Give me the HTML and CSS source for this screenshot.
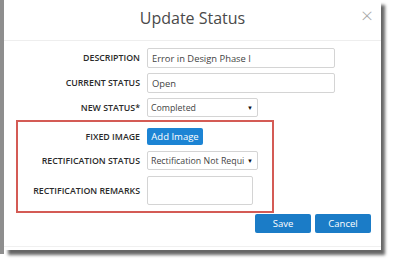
FILE: index.html
```html
<!DOCTYPE html>
<html lang="en">
<head>
    <meta charset="UTF-8">
    <title>Update Status</title>
    <link rel="stylesheet" href="styles.css">
</head>
<body>
    <div class="backdrop">
        <div class="modal">
            <div class="modal-header">
                <div class="modal-title">Update Status</div>
                <span class="close-btn">&times;</span>
            </div>
            <div class="modal-body">
                <div class="form-row">
                    <label>DESCRIPTION</label>
                    <div class="field wide">Error in Design Phase I</div>
                </div>
                <div class="form-row">
                    <label>CURRENT STATUS</label>
                    <div class="field wide">Open</div>
                </div>
                <div class="form-row">
                    <label>NEW STATUS*</label>
                    <div class="field select"><span class="value">Completed</span><span class="caret">&#9660;</span></div>
                </div>

                <!-- highlighted part -->
                <div class="highlight">
                    <div class="form-row">
                        <label>FIXED IMAGE</label>
                        <button class="add-btn">Add Image</button>
                    </div>
                    <div class="form-row">
                        <label>RECTIFICATION STATUS</label>
                        <div class="field select"><span class="value">Rectification Not Requi</span><span class="caret">&#9660;</span></div>
                    </div>
                    <div class="form-row">
                        <label>RECTIFICATION REMARKS</label>
                        <div class="field textarea"></div>
                    </div>
                </div>
            </div>
            <div class="actions">
                <button class="btn">Save</button>
                <button class="btn">Cancel</button>
            </div>
            <div class="modal-footer"></div>
        </div>
    </div>
</body>
</html>
```

FILE: styles.css
```css
* {
    margin: 0;
    padding: 0;
    box-sizing: border-box;
    font-family: 'Open Sans', sans-serif;
}

body {
    background: #fff;
    width: 393px;
    height: 267px;
    overflow: hidden;
}

.backdrop {
    border-left: 4px solid #8e8e8e;
    height: 254px;
    width: 380px;
}

.modal {
    background: #fff;
    width: 377px;
    height: 250px;
    box-shadow: 4px 5px 3px rgba(0, 0, 0, 0.6);
    display: flex;
    flex-direction: column;
}

.modal-header {
    height: 41px;
    border-bottom: 1px solid #eeeeee;
    display: flex;
    align-items: center;
    justify-content: center;
    position: relative;
}

.modal-title {
    font-size: 16px;
    color: #4a4a4a;
    margin-top: -5px;
}

.close-btn {
    position: absolute;
    right: 8px;
    top: 1px;
    font-size: 21px;
    color: #a8a8a8;
    font-weight: 300;
}

.modal-body {
    padding-top: 7px;
    display: flex;
    flex-direction: column;
    gap: 5px;
}

.form-row {
    display: flex;
    align-items: center;
    gap: 7px;
}

.form-row label {
    width: 136px;
    text-align: right;
    font-size: 8.8px;
    font-weight: 600;
    color: #2a2a2a;
}

.field {
    height: 20px;
    border: 1px solid #d4d4d4;
    border-radius: 2px;
    font-size: 9.4px;
    color: #444;
    padding: 0 4px;
    display: flex;
    align-items: center;
}

.field.wide {
    width: 188px;
}

.field.select {
    width: 111px;
    height: 19px;
    gap: 2px;
    padding: 0 4px 0 3px;
    font-size: 8.8px;
}

.value {
    flex: 1;
    white-space: nowrap;
}

.caret {
    font-size: 6px;
    color: #111;
}

.field.textarea {
    width: 106px;
    height: 29px;
}

.highlight {
    margin-left: 12px;
    width: 258px;
    border: 2px solid #d45b55;
    padding: 6px 0 6px;
    display: flex;
    flex-direction: column;
    gap: 6px;
    margin-top: -2px;
}

.highlight .form-row label {
    width: 122px;
}

.add-btn {
    background: #1c84d4;
    color: #fff;
    border: none;
    border-radius: 2px;
    font-size: 9.5px;
    height: 17px;
    width: 56px;
}

.actions {
    display: flex;
    justify-content: flex-end;
    gap: 4px;
    padding-right: 10px;
    margin-top: 1px;
}

.btn {
    background: #1b7cc7;
    color: #fff;
    border: none;
    border-radius: 2px;
    font-size: 9.5px;
    width: 56px;
    height: 19px;
}

.modal-footer {
    margin-top: auto;
    height: 4px;
    border-top: 1px solid #f0f0f0;
}
```
